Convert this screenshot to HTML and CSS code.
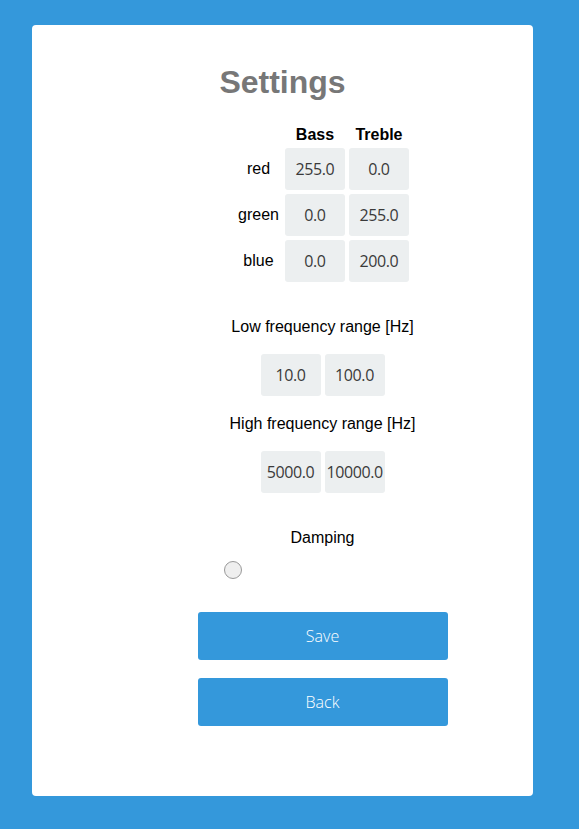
FILE: index.html
```html
<!DOCTYPE html>
<html>
<head>
<meta charset="utf-8">
<link rel="stylesheet" href="styles.css">
</head>
<body>
<div class="card">
  <h1 class="title">Settings</h1>
  <form class="form">
    <div class="grid">
      <div></div><div class="head">Bass</div><div class="head">Treble</div>
      <div class="lbl">red</div><input class="field" value="255.0"><input class="field" value="0.0">
      <div class="lbl">green</div><input class="field" value="0.0"><input class="field" value="255.0">
      <div class="lbl">blue</div><input class="field" value="0.0"><input class="field" value="200.0">
    </div>
    <div class="section-label first">Low frequency range [Hz]</div>
    <div class="pair"><input class="field" value="10.0"><input class="field" value="100.0"></div>
    <div class="section-label">High frequency range [Hz]</div>
    <div class="pair"><input class="field" value="5000.0"><input class="field" value="10000.0"></div>
    <div class="section-label first">Damping</div>
    <div class="check-row"><input type="checkbox" class="check"></div>
    <button type="button" class="btn save">Save</button>
    <button type="button" class="btn back">Back</button>
  </form>
</div>
</body>
</html>
```
FILE: styles.css
```css
html, body {
  margin: 0;
  padding: 0;
}
body {
  background: #3498db;
  padding: 25px 0 33px 32px;
  font-family: "Liberation Sans", Arial, sans-serif;
  font-size: 16px;
  color: #000;
}
.card {
  width: 501px;
  background: #fff;
  border-radius: 4px;
  padding: 39px 0 70px 0;
  box-sizing: border-box;
}
.title {
  margin: 0;
  text-align: center;
  font-size: 32px;
  line-height: 37px;
  font-weight: bold;
  color: #777;
}
.form {
  margin: 24px 0 0 80px;
  display: flex;
  flex-direction: column;
  align-items: center;
}
.grid {
  display: grid;
  grid-template-columns: auto 60px 60px;
  grid-template-rows: 19px 42px 42px 42px;
  gap: 4px;
  align-items: center;
}
.head {
  font-weight: bold;
  text-align: center;
  line-height: 18px;
  align-self: end;
}
.lbl {
  text-align: center;
  padding: 0 2px;
  line-height: 18px;
}
.field {
  width: 60px;
  height: 42px;
  box-sizing: border-box;
  border: none;
  border-radius: 3px;
  background: #eceff0;
  font-family: "Open Sans", sans-serif;
  font-size: 16px;
  letter-spacing: -0.4px;
  color: #3a3a3a;
  text-align: center;
  padding: 0 2px;
  margin: 0;
  outline: none;
}
.section-label {
  line-height: 18px;
  padding-top: 1px;
  margin-top: 18px;
}
.section-label.first {
  margin-top: 35px;
}
.pair {
  display: flex;
  gap: 4px;
  margin-top: 18px;
}
.check-row {
  width: 250px;
  margin-top: 14px;
  display: flex;
}
.check {
  appearance: none;
  -webkit-appearance: none;
  width: 18px;
  height: 18px;
  margin: 0 0 0 26px;
  border: 1px solid #999;
  border-radius: 50%;
  background: #efefef;
  box-sizing: border-box;
}
.btn {
  width: 250px;
  height: 48px;
  border: none;
  border-radius: 3px;
  background: #3498db;
  color: #fff;
  font-family: "Open Sans", sans-serif;
  font-weight: 300;
  font-size: 16px;
  margin: 0;
  padding: 0;
}
.save {
  margin-top: 33px;
}
.back {
  margin-top: 18px;
}
```
